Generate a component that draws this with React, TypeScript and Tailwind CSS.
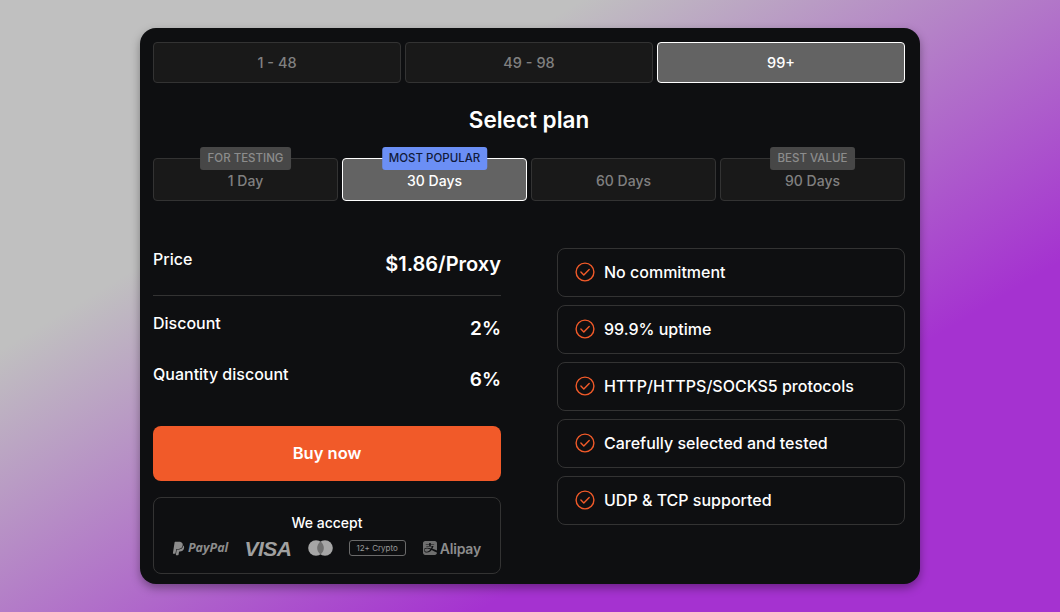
import React from 'react';
import { FaPaypal, FaAlipay } from 'react-icons/fa';

const ranges = [
  { label: '1 - 48', active: false },
  { label: '49 - 98', active: false },
  { label: '99+', active: true },
];

const plans = [
  { label: '1 Day', badge: 'FOR TESTING', active: false },
  { label: '30 Days', badge: 'MOST POPULAR', active: true },
  { label: '60 Days', badge: null, active: false },
  { label: '90 Days', badge: 'BEST VALUE', active: false },
];

const features = [
  'No commitment',
  '99.9% uptime',
  'HTTP/HTTPS/SOCKS5 protocols',
  'Carefully selected and tested',
  'UDP & TCP supported',
];

const CheckIcon = () => (
  <svg width="20" height="20" viewBox="0 0 20 20" fill="none" className="shrink-0">
    <circle cx="10" cy="10" r="8.9" stroke="#f15a29" strokeWidth="1.4" />
    <path d="M5.9 10.1l2.9 2.9 5.4-5.6" stroke="#f15a29" strokeWidth="1.4" strokeLinecap="round" strokeLinejoin="round" />
  </svg>
);

const PaymentLogos = () => (
  <div className="flex items-center justify-between pl-[17px] pr-[19px] mt-[5px] h-[18px] text-[#8c8c8c]">
    <div className="flex items-center gap-[2px]">
      <FaPaypal size={15} />
      <span className="text-[12.5px] font-bold italic font-['Open_Sans',sans-serif]">PayPal</span>
    </div>
    <span className="text-[21px] leading-none font-bold italic tracking-[-0.5px] text-[#a0a0a0] font-['Liberation_Sans',sans-serif]">VISA</span>
    <svg width="25" height="16" viewBox="0 0 25 16">
      <circle cx="8" cy="8" r="7.8" fill="#a6a6a6" />
      <circle cx="17" cy="8" r="7.8" fill="#a6a6a6" />
      <path d="M12.5 1.6a7.8 7.8 0 0 1 0 12.8a7.8 7.8 0 0 1 0-12.8z" fill="#6f6f6f" />
    </svg>
    <div className="w-[57px] h-[16px] flex items-center justify-center rounded-[3px] border border-[#6a6a6a] text-[8px] text-[#999999]">
      12+ Crypto
    </div>
    <div className="flex items-center gap-[2px]">
      <FaAlipay size={16} className="text-[#6f6f6f]" />
      <span className="text-[14px] font-semibold tracking-[-0.2px]">Alipay</span>
    </div>
  </div>
);

export default function App() {
  return (
    <div className="h-[612px] flex items-center justify-center overflow-hidden bg-[linear-gradient(149deg,#c0c0c0_28%,#a532d0_72%)] font-['Inter',sans-serif]">
      <div className="w-[780px] h-[556px] rounded-2xl bg-[#0e0f11] pl-[13px] pr-[15px] pt-[14px] shadow-[0_4px_10px_rgba(0,0,0,0.35)]">
        {/* quantity tabs */}
        <div className="grid grid-cols-3 gap-1">
          {ranges.map((r) => (
            <div
              key={r.label}
              className={
                r.active
                  ? 'h-[41px] flex items-center justify-center rounded border border-white bg-[#636363] text-[14.5px] font-medium text-white'
                  : 'h-[41px] flex items-center justify-center rounded border border-[#333333] bg-[#191919] text-[14.5px] font-medium text-[#808080]'
              }
            >
              {r.label}
            </div>
          ))}
        </div>

        <h2 className="mt-[22px] h-[30px] flex items-center justify-center text-[22.5px] font-semibold text-white">
          Select plan
        </h2>

        {/* plan length */}
        <div className="mt-[23px] grid grid-cols-4 gap-1">
          {plans.map((p) => (
            <div
              key={p.label}
              className={
                p.active
                  ? 'relative h-[43px] pt-[2px] flex items-center justify-center rounded border border-white bg-[#636363] text-sm font-medium text-white'
                  : 'relative h-[43px] pt-[2px] flex items-center justify-center rounded border border-[#333333] bg-[#191919] text-sm font-medium text-[#808080]'
              }
            >
              {p.label}
              {p.badge && (
                <span
                  className={
                    p.active
                      ? 'absolute left-1/2 -translate-x-1/2 -top-[12px] h-[23px] px-[7px] flex items-center whitespace-nowrap rounded-[3px] bg-[#6b8ff5] text-[11.5px] font-medium text-[#111a3a]'
                      : 'absolute left-1/2 -translate-x-1/2 -top-[12px] h-[23px] px-[8px] flex items-center whitespace-nowrap rounded-[3px] bg-[#474747] text-[11.5px] font-medium text-[#8c8c8c]'
                  }
                >
                  {p.badge}
                </span>
              )}
            </div>
          ))}
        </div>

        <div className="mt-[47px] grid grid-cols-2 gap-14">
          <div>
            <div className="flex justify-between h-[47px] border-b border-[#333333] box-content">
              <span className="leading-[22px] text-[16px] font-medium text-white">Price</span>
              <span className="mt-[1px] text-[20px] font-semibold text-white">$1.86/Proxy</span>
            </div>
            <div className="flex justify-between mt-[15px] h-[26px]">
              <span className="text-[16px] font-medium text-white">Discount</span>
              <span className="mt-[4px] text-[19px] font-semibold text-white">2%</span>
            </div>
            <div className="flex justify-between mt-[25px] h-[26px]">
              <span className="text-[16px] font-medium text-white">Quantity discount</span>
              <span className="mt-[4px] text-[19px] font-semibold text-white">6%</span>
            </div>
            <button className="mt-[38px] w-full h-[55px] rounded-lg bg-[#f15a29] text-[16.5px] font-semibold text-white">
              Buy now
            </button>
            <div className="mt-4 h-[77px] rounded-lg border border-[#333333] pt-[15px]">
              <p className="text-center text-sm leading-[20px] font-medium text-white">We accept</p>
              <div className="pt-[1px]">
                <PaymentLogos />
              </div>
            </div>
          </div>

          <div className="flex flex-col gap-2">
            {features.map((f) => (
              <div key={f} className="h-[49px] pb-[2px] flex items-center gap-[9px] rounded-lg border border-[#333333] pl-[17px]">
                <CheckIcon />
                <span className="text-[16px] font-medium text-white">{f}</span>
              </div>
            ))}
          </div>
        </div>
      </div>
    </div>
  );
}
